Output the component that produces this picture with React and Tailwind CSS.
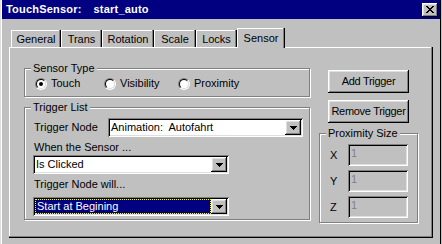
import React from "react";

const RAISED =
  "shadow-[inset_-1px_-1px_0_#000,inset_1px_1px_0_#fff,inset_-2px_-2px_0_#808080,inset_2px_2px_0_#dfdfdf]";
const SUNKEN =
  "shadow-[inset_1px_1px_0_#808080,inset_-1px_-1px_0_#fff,inset_2px_2px_0_#000,inset_-2px_-2px_0_#dfdfdf]";

function CloseIcon() {
  const rows = [0, 1, 2, 3, 4, 5, 6];
  return (
    <svg width="8" height="7" viewBox="0 0 8 7" shapeRendering="crispEdges">
      {rows.map((i) => (
        <g key={i} fill="#000">
          <rect x={i} y={i} width="2" height="1" />
          <rect x={6 - i} y={i} width="2" height="1" />
        </g>
      ))}
    </svg>
  );
}

function Arrow() {
  return (
    <svg width="7" height="4" viewBox="0 0 7 4" shapeRendering="crispEdges">
      <path d="M0 0h7v1h-1v1h-1v1h-1v1h-1v-1h-1v-1h-1v-1h-1z" fill="#000" />
    </svg>
  );
}

function Tab({ label, w, active }) {
  return (
    <div
      className={`${w} flex justify-center bg-[#c0c0c0] shadow-[inset_-1px_0_0_#000,inset_-2px_0_0_#808080,inset_1px_0_0_#fff,inset_0_1px_0_#fff] ${
        active ? "relative z-10 -mb-[1px] h-[20px] pt-[4px]" : "h-[17px] pt-[3px]"
      }`}
    >
      {label}
    </div>
  );
}

function Group({ label, className, children }) {
  return (
    <div
      className={`relative border border-[#808080] shadow-[inset_1px_1px_0_#fff,1px_1px_0_#fff] ${className}`}
    >
      <span className="absolute -top-[7px] left-[6px] px-[2px] bg-[#c0c0c0] whitespace-nowrap">
        {label}
      </span>
      {children}
    </div>
  );
}

function Radio({ label, checked, w }) {
  return (
    <div className={`flex items-center gap-[4px] h-[13px] ${w}`}>
      <span className="w-[12px] h-[12px] rounded-full border border-t-[#808080] border-l-[#808080] border-b-white border-r-white flex items-center justify-center">
        <span className="w-[10px] h-[10px] rounded-full border border-t-black border-l-black border-b-[#dfdfdf] border-r-[#dfdfdf] bg-white flex items-center justify-center">
          {checked && <span className="w-[4px] h-[4px] rounded-full bg-black" />}
        </span>
      </span>
      <span>{label}</span>
    </div>
  );
}

function Combo({ text, w, focused, className = "" }) {
  return (
    <div className={`flex h-[19px] p-[2px] bg-white ${SUNKEN} ${w} ${className}`}>
      {focused ? (
        <div className="flex-1 flex items-center pl-[1px] bg-[#000080] text-white border border-dotted border-[#ffff00] whitespace-pre">
          {text}
        </div>
      ) : (
        <div className="flex-1 flex items-center pl-[1px] whitespace-pre">{text}</div>
      )}
      <div className={`w-[16px] h-full flex items-center justify-center bg-[#c0c0c0] ${RAISED}`}>
        <Arrow />
      </div>
    </div>
  );
}

function Button({ label, className = "" }) {
  return (
    <div
      className={`w-[81px] h-[23px] flex items-center justify-center whitespace-nowrap tracking-[-0.3px] bg-[#c0c0c0] ${RAISED} ${className}`}
    >
      {label}
    </div>
  );
}

function SizeField({ axis }) {
  return (
    <div className="flex items-center">
      <span className="w-[18px]">{axis}</span>
      <div className={`w-[60px] h-[22px] pl-[3px] pt-[3px] bg-[#c0c0c0] text-[#808080] ${SUNKEN}`}>1</div>
    </div>
  );
}

export default function App() {
  return (
    <div className="w-[442px] h-[244px] bg-[#c0c0c0] overflow-hidden font-['Liberation_Sans',Arial,sans-serif] text-[11px] leading-[13px] text-black">
      <div className="w-[441px] h-full pl-[2px] pr-[1px] shadow-[inset_1px_0_0_#dfdfdf,inset_2px_0_0_#fff,inset_-1px_0_0_#000]">
        {/* title bar */}
        <div className="h-[19px] flex items-center justify-between bg-[#000080] pl-[4px] pr-[2px]">
          <span className="font-bold text-white whitespace-nowrap tracking-[0.2px]">
            TouchSensor:<span className="ml-[12px]">start_auto</span>
          </span>
          <div className={`w-[16px] h-[14px] flex items-center justify-center bg-[#c0c0c0] ${RAISED}`}>
            <CloseIcon />
          </div>
        </div>

        <div className="pl-[7px] pt-[9px]">
          {/* tabs */}
          <div className="flex items-end h-[19px] pl-[2px]">
            <Tab label="General" w="w-[50px]" />
            <Tab label="Trans" w="w-[41px]" />
            <Tab label="Rotation" w="w-[52px]" />
            <Tab label="Scale" w="w-[42px]" />
            <Tab label="Locks" w="w-[41px]" />
            <Tab label="Sensor" w="w-[48px]" active />
          </div>

          {/* panel */}
          <div className="w-[424px] h-[191px] flex pl-[15px] shadow-[inset_-1px_-1px_0_#000,inset_-2px_-2px_0_#808080,inset_1px_1px_0_#fff]">
            <div className="w-[286px] mt-[21px] flex flex-col">
              <Group label="Sensor Type" className="h-[29px] pl-[10px] pt-[8px]">
                <div className="flex">
                  <Radio label="Touch" checked w="w-[69px]" />
                  <Radio label="Visibility" w="w-[74px]" />
                  <Radio label="Proximity" />
                </div>
              </Group>

              <Group label="Trigger List" className="mt-[10px] h-[113px] pl-[8px] pt-[10px] flex flex-col">
                <div className="flex items-center">
                  <span className="ml-[1px] w-[74px]">Trigger Node</span>
                  <Combo text="Animation:  Autofahrt" w="w-[195px]" />
                </div>
                <span className="mt-[4px] ml-[1px]">When the Sensor ...</span>
                <Combo text="Is Clicked" w="w-[196px]" className="mt-[1px]" />
                <span className="mt-[4px] ml-[1px]">Trigger Node will...</span>
                <Combo text="Start at Begining" w="w-[196px]" className="mt-[6px]" focused />
              </Group>
            </div>

            <div className="ml-[9px] w-[99px] pt-[23px] flex flex-col">
              <Button label="Add Trigger" className="ml-[9px]" />
              <Button label="Remove Trigger" className="ml-[9px] mt-[7px]" />
              <Group label="Proximity Size" className="mt-[10px] h-[90px] pl-[10px] pt-[10px] flex flex-col gap-[4px]">
                <SizeField axis="X" />
                <SizeField axis="Y" />
                <SizeField axis="Z" />
              </Group>
            </div>
          </div>
        </div>
      </div>
    </div>
  );
}
